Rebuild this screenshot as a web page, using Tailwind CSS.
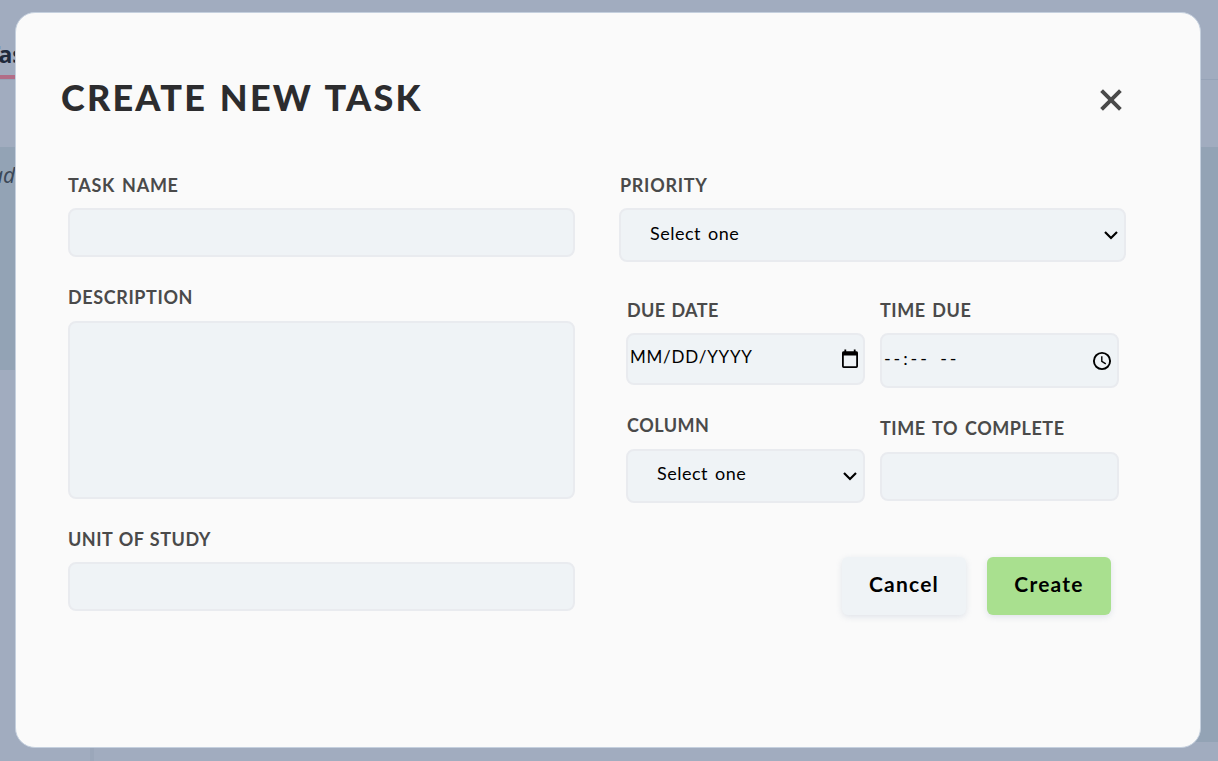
<!DOCTYPE html>
<html lang="en">
<head>
<meta charset="utf-8">
<title>Create New Task</title>
<script src="https://cdn.jsdelivr.net/npm/@tailwindcss/browser@4"></script>
</head>
<body class="relative h-[761px] w-[1218px] overflow-hidden bg-[#a1acbf] font-['Lato',sans-serif]">
  <!-- Page behind the dialog -->
  <div class="flex h-[761px] flex-col">
    <header class="flex h-[80px] flex-col justify-end border-b border-[#96a3b7]">
      <div class="w-[60px] border-b-4 border-[#b26d87] pb-[5px] font-['Noto_Sans',sans-serif] text-[23px] leading-[32px] font-bold text-[#1f2a3c]"><span class="-ml-[13px]">Tasks</span></div>
    </header>
    <div class="h-[67px] shrink-0"></div>
    <div class="flex h-[595px] justify-between">
      <div class="h-[223px] w-[60px] bg-[#93a3b5] pt-[13px] font-['Noto_Sans',sans-serif] text-[21px] leading-[30px] text-[#3c4858] italic"><span class="-ml-[9px]">ade</span></div>
      <div class="w-[60px] bg-[#93a3b5]"></div>
    </div>
    <div class="ml-[90px] h-[19px] w-[4px] bg-[#9ba7ba]"></div>
  </div>

  <!-- Dialog -->
  <div class="absolute inset-0 pt-[12px] pl-[15px]">
    <main class="h-[736px] w-[1186px] rounded-[20px] border border-[#c5d0de] bg-[#fafafa] pr-[74px] pl-[45px]">
      <div class="flex h-[160px] items-start justify-between pt-[60px]">
        <h1 class="text-[36px] leading-[48px] font-black tracking-[2.2px] [word-spacing:2px] whitespace-nowrap text-[#2c2c2e]">CREATE NEW TASK</h1>
        <button class="mt-[15px] mr-[3px]" aria-label="Close"><svg class="block h-[24px] w-[24px]" viewBox="0 0 24 24" fill="none" stroke="#4a4a4a" stroke-width="3.9"><path d="M2.6 2.6 21.4 21.4M21.4 2.6 2.6 21.4"/></svg></button>
      </div>

      <div class="flex gap-[44px] pl-[7px] text-[18px] leading-[24px]">
        <section class="w-[507px] shrink-0">
          <div class="font-bold tracking-[0.7px] [word-spacing:2px] text-[#4a4a4a]">TASK NAME</div>
          <div class="mt-[11px] h-[49px] rounded-[8px] border-2 border-[#e9ebef] bg-[#eff3f6]"></div>
          <div class="mt-[28px] font-bold tracking-[0.6px] text-[#4a4a4a]">DESCRIPTION</div>
          <div class="mt-[12px] h-[178px] rounded-[8px] border-2 border-[#e9ebef] bg-[#eff3f6]"></div>
          <div class="mt-[28px] font-bold tracking-[0.5px] [word-spacing:1px] text-[#4a4a4a]">UNIT OF STUDY</div>
          <div class="mt-[11px] h-[49px] rounded-[8px] border-2 border-[#e9ebef] bg-[#eff3f6]"></div>
        </section>

        <section class="w-[507px] shrink-0">
          <div class="pl-px font-bold tracking-[0.7px] text-[#4a4a4a]">PRIORITY</div>
          <div class="mt-[11px] flex h-[54px] items-center justify-between rounded-[8px] border-2 border-[#e9ebef] bg-[#eff3f6] pr-[6px] pl-[29px]">
            <span class="-mt-[4px] tracking-[0.5px] [word-spacing:2px] text-black">Select one</span>
            <svg class="h-[14px] w-[14px]" viewBox="0 0 14 14" fill="none" stroke="#000" stroke-width="2.2"><path d="M1 4 7 10 13 4"/></svg>
          </div>

          <div class="mt-[36px] flex gap-[15px] pl-[7px]">
            <div class="w-[239px] shrink-0">
              <div class="pl-px font-bold tracking-[0.4px] [word-spacing:1px] text-[#4a4a4a]">DUE DATE</div>
              <div class="mt-[11px] flex h-[52px] items-center justify-between rounded-[8px] border-2 border-[#e9ebef] bg-[#eff3f6] pr-[4px] pl-[2px]">
                <span class="-mt-[4px] text-[17px] tracking-[0.75px] text-black">MM/DD/YYYY</span>
                <svg class="h-[20px] w-[18px]" viewBox="0 0 18 20" fill="none" stroke="#000"><rect x="1.9" y="3.4" width="14.2" height="14.7" rx=".8" stroke-width="1.8"/><path fill="#000" stroke="none" d="M1.5 2.5h15v4h-15zM3.4.5h1.8v3H3.4zM12.8.5h1.8v3h-1.8z"/></svg>
              </div>
              <div class="mt-[28px] pl-px font-bold tracking-[0.5px] text-[#4a4a4a]">COLUMN</div>
              <div class="mt-[12px] flex h-[54px] items-center justify-between rounded-[8px] border-2 border-[#e9ebef] bg-[#eff3f6] pr-[6px] pl-[29px]">
                <span class="-mt-[6px] tracking-[0.5px] [word-spacing:2px] text-black">Select one</span>
                <svg class="h-[14px] w-[14px]" viewBox="0 0 14 14" fill="none" stroke="#000" stroke-width="2.2"><path d="M1 4 7 10 13 4"/></svg>
              </div>
            </div>
            <div class="w-[239px] shrink-0">
              <div class="font-bold tracking-[0.5px] [word-spacing:2px] text-[#4a4a4a]">TIME DUE</div>
              <div class="mt-[11px] flex h-[55px] items-center justify-between rounded-[8px] border-2 border-[#e9ebef] bg-[#eff3f6] pr-[5px] pl-[2px]">
                <span class="-mt-[5px] tracking-[2.9px] [word-spacing:3px] whitespace-pre text-black">--:-- --</span>
                <svg class="h-[20px] w-[20px]" viewBox="0 0 20 20" fill="none" stroke="#000"><circle cx="10" cy="10" r="8.1" stroke-width="1.9"/><path stroke-width="1.4" d="M9.8 5.2v5.2l4 2.5"/></svg>
              </div>
              <div class="mt-[28px] font-bold tracking-[0.55px] [word-spacing:2px] text-[#4a4a4a]">TIME TO COMPLETE</div>
              <div class="mt-[12px] h-[49px] rounded-[8px] border-2 border-[#e9ebef] bg-[#eff3f6]"></div>
            </div>
          </div>

          <div class="mt-[54px] flex justify-end gap-[21px] pr-[15px] text-[21px] font-bold text-black">
            <button class="h-[58px] w-[124px] rounded-[6px] bg-[#eff3f6] pb-[5px] tracking-[1.2px] shadow-[0_2px_6px_rgba(120,140,170,0.2)]">Cancel</button>
            <button class="h-[58px] w-[124px] rounded-[6px] bg-[#a9e08f] pb-[5px] tracking-[1.2px] shadow-[0_2px_6px_rgba(120,140,170,0.2)]">Create</button>
          </div>
        </section>
      </div>
    </main>
  </div>
</body>
</html>
